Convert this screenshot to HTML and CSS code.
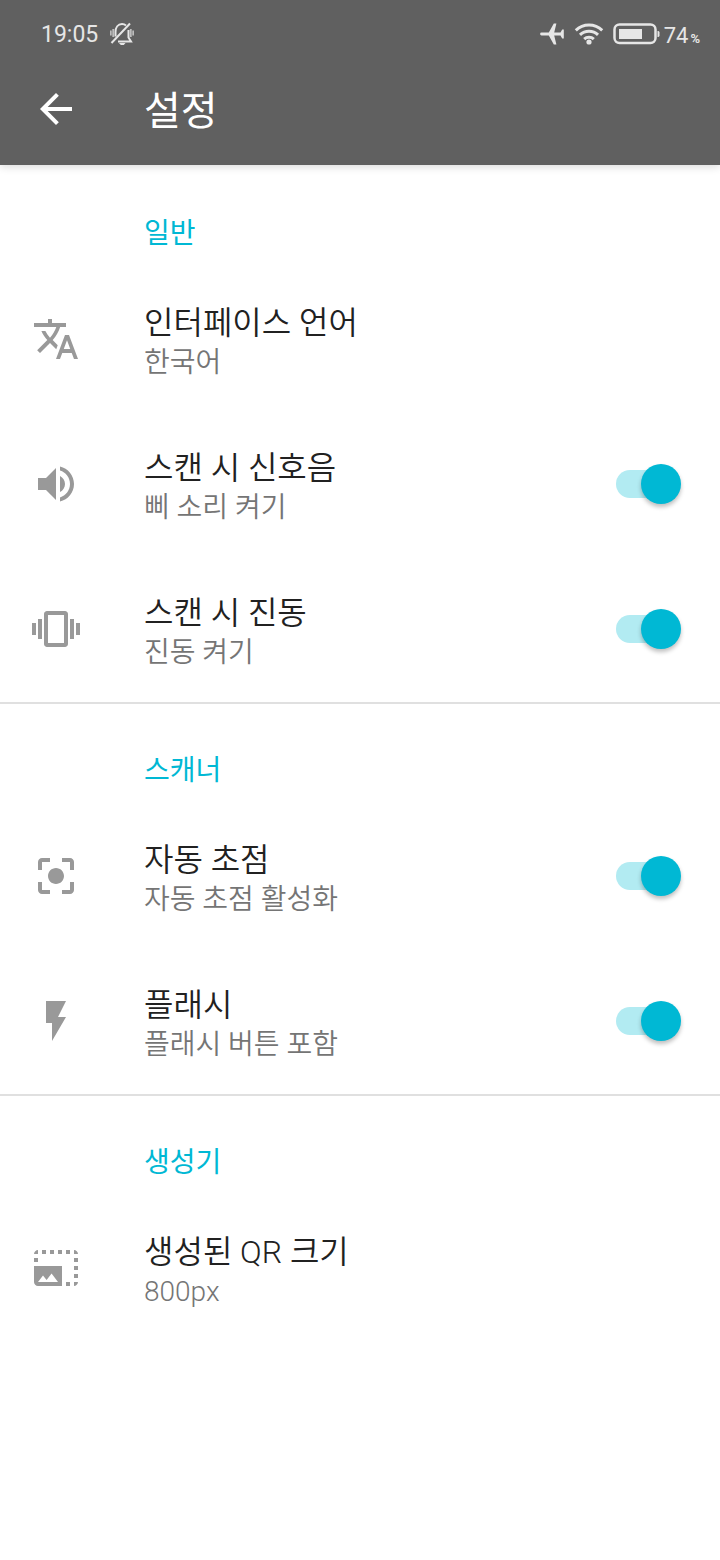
FILE: index.html
```html
<!DOCTYPE html>
<html lang="ko">
<head>
  <meta charset="UTF-8" />
  <meta name="viewport" content="width=device-width, initial-scale=1" />
  <title>설정</title>
  <link rel="stylesheet" href="styles.css">
</head>
<body>

  <header class="top">
    <!-- Status bar -->
    <div class="status-bar">
      <span class="clock">19:05</span>
      <svg class="bell" viewBox="0 0 24 24" width="24" height="24" fill="none" stroke="currentColor" stroke-width="2">
        <path d="M5.500 14.500V10C5.500 5.500 8 2 12 2c1.600 0 3 .5 4 1.400M18.500 8v7.500l2.500 4H8" />
        <path d="M1.500 21L20 1.500" />
        <path d="M9 21h6.500l-1.700 2h-3z" fill="currentColor" stroke="none" />
        <path d="M.8 8.500v5M3.200 7v8M20.800 7v8M23.200 8.500v5" stroke-width="1.800" opacity=".7" />
      </svg>
      <div class="status-icons">
        <svg class="plane" viewBox="0 0 26 24" width="26" height="24" fill="currentColor">
          <path d="M1.500 10.600h7.300L13.800 1.500h2.600l-2.200 9.100h6.300l1.700-3h1.600v8.800h-1.600l-1.700-3h-6.300l2.200 9.100h-2.600L8.800 13.400H1.500a1.400 1.400 0 0 1 0-2.800z" />
        </svg>
        <svg class="wifi" viewBox="0 0 30 24" width="30" height="24" fill="none" stroke="currentColor" stroke-width="3">
          <path d="M1.800 8.300a19 19 0 0 1 26.400 0M6 12.900a13 13 0 0 1 18 0M10.200 17.200a7 7 0 0 1 9.600 0" />
          <circle cx="15" cy="20" r="2.600" fill="currentColor" stroke="none" />
        </svg>
        <svg class="battery" viewBox="0 0 48 24" width="48" height="24" fill="currentColor">
          <rect x="2.500" y="2.500" width="41" height="18.500" rx="5" fill="none" stroke="currentColor" stroke-width="2.500" />
          <rect x="7" y="7" width="23" height="10" />
          <path d="M45.500 9h1l1 1v4l-1 1h-1z" />
        </svg>
        <span class="charge">74<small>%</small></span>
      </div>
    </div>

    <!-- App bar -->
    <div class="app-bar">
      <button class="back" type="button" aria-label="뒤로">
        <svg viewBox="0 0 24 24" width="48" height="48" fill="currentColor">
          <path d="M20 11H7.830l5.590-5.590L12 4l-8 8 8 8 1.410-1.410L7.830 13H20v-2z" />
        </svg>
      </button>
      <h1>설정</h1>
    </div>
  </header>

  <main>
    <section class="group">
      <h2>일반</h2>
      <button class="item" type="button">
        <svg class="icon" viewBox="0 0 24 24">
          <path d="M12.870 15.070l-2.540-2.510.03-.03c1.740-1.940 2.980-4.170 3.710-6.530H17V4h-7V2H8v2H1v1.990h11.170C11.500 7.920 10.440 9.750 9 11.350 8.070 10.320 7.300 9.190 6.690 8h-2c.73 1.630 1.730 3.170 2.980 4.560l-5.090 5.020L4 19l5-5 3.110 3.110.76-2.040zM18.500 10h-2L12 22h2l1.120-3h4.750L21 22h2l-4.500-12zm-2.620 7l1.620-4.330L19.120 17h-3.240z" />
        </svg>
        <span class="text">
          <span class="title">인터페이스 언어</span>
          <span class="summary">한국어</span>
        </span>
      </button>
      <label class="item">
        <svg class="icon" viewBox="0 0 24 24">
          <path d="M3 9v6h4l5 5V4L7 9H3zm13.500 3c0-1.770-1.020-3.290-2.500-4.030v8.050c1.480-.73 2.500-2.250 2.500-4.020zM14 3.230v2.060c2.890.86 5 3.540 5 6.710s-2.110 5.850-5 6.710v2.060c4.010-.91 7-4.490 7-8.770s-2.990-7.860-7-8.770z" />
        </svg>
        <span class="text">
          <span class="title">스캔 시 신호음</span>
          <span class="summary">삐 소리 켜기</span>
        </span>
        <input class="switch" type="checkbox" checked>
      </label>
      <label class="item">
        <svg class="icon" viewBox="0 0 24 24">
          <path d="M0 15h2V9H0v6zm3 2h2V7H3v10zm19-8v6h2V9h-2zm-3 8h2V7h-2v10zM16.500 3h-9C6.670 3 6 3.670 6 4.500v15c0 .83.67 1.500 1.500 1.500h9c.83 0 1.500-.67 1.500-1.500v-15c0-.83-.67-1.500-1.500-1.500zM16 19H8V5h8v14z" />
        </svg>
        <span class="text">
          <span class="title">스캔 시 진동</span>
          <span class="summary">진동 켜기</span>
        </span>
        <input class="switch" type="checkbox" checked>
      </label>
    </section>

    <section class="group">
      <h2>스캐너</h2>
      <label class="item">
        <svg class="icon" viewBox="0 0 24 24">
          <path d="M12 8c-2.210 0-4 1.790-4 4s1.790 4 4 4 4-1.790 4-4-1.790-4-4-4zm-7 7H3v4c0 1.100.9 2 2 2h4v-2H5v-4zM5 5h4V3H5c-1.100 0-2 .9-2 2v4h2V5zm14-2h-4v2h4v4h2V5c0-1.100-.9-2-2-2zm0 16h-4v2h4c1.100 0 2-.9 2-2v-4h-2v4z" />
        </svg>
        <span class="text">
          <span class="title">자동 초점</span>
          <span class="summary">자동 초점 활성화</span>
        </span>
        <input class="switch" type="checkbox" checked>
      </label>
      <label class="item">
        <svg class="icon" viewBox="0 0 24 24">
          <path d="M7 2v11h3v9l7-12h-4l4-8z" />
        </svg>
        <span class="text">
          <span class="title">플래시</span>
          <span class="summary">플래시 버튼 포함</span>
        </span>
        <input class="switch" type="checkbox" checked>
      </label>
    </section>

    <section class="group">
      <h2>생성기</h2>
      <button class="item" type="button">
        <svg class="icon" viewBox="0 0 24 24">
          <path d="M21 15h2v2h-2v-2zm0-4h2v2h-2v-2zm2 8h-2v2c1 0 2-1 2-2zM13 3h2v2h-2V3zm8 4h2v2h-2V7zm0-4v2h2c0-1-1-2-2-2zM1 7h2v2H1V7zm16-4h2v2h-2V3zm0 16h2v2h-2v-2zM3 3C2 3 1 4 1 5h2V3zm6 0h2v2H9V3zM5 3h2v2H5V3zm-4 8v8c0 1.100.9 2 2 2h12V11H1zm2 8l2.500-3.210 1.790 2.150 2.500-3.220L13 19H3z" />
        </svg>
        <span class="text">
          <span class="title">생성된 QR 크기</span>
          <span class="summary">800px</span>
        </span>
      </button>
    </section>
  </main>

</body>
</html>
```

FILE: styles.css
```css
/* ----- Reset & Basic Setup ----- */
* {
  margin: 0;
  padding: 0;
  box-sizing: border-box;
}

body {
  background: #fff;
  color: #212121;
  font-family: Roboto, "Noto Sans CJK KR", sans-serif;
}

button {
  border: 0;
  background: none;
  color: inherit;
  font: inherit;
  text-align: left;
}

svg {
  display: block;
  flex: none;
}

/* ----- Top: status bar + app bar ----- */
.top {
  background: #606060;
  color: #fff;
  box-shadow: 0 2px 8px rgba(0, 0, 0, 0.14);
}

.status-bar {
  display: flex;
  align-items: center;
  height: 68px;
  padding: 0 20px 0 41px;
  color: #e6e6e6;
  font-size: 23px;
  line-height: 28px;
}
.clock {
  padding-top: 1px;
}
.bell {
  margin-left: 12px;
}
.status-icons {
  display: flex;
  align-items: center;
  gap: 8px;
  margin-left: auto;
}
.charge {
  margin-left: -4px;
  padding-top: 3px;
  font-size: 22px;
}
.charge small {
  margin-left: 2px;
  font-size: 13px;
  font-weight: 700;
  line-height: 12px;
}

.app-bar {
  display: flex;
  align-items: center;
  gap: 64px;
  height: 97px;
  padding: 0 32px 16px;
}
.app-bar h1 {
  padding-top: 6px;
  font-size: 40px;
  font-weight: 400;
  line-height: 48px;
}

/* ----- Setting groups ----- */
.group {
  border-top: 2px solid #e0e0e0;
}
.group:first-child {
  border-color: transparent;
}
.group h2 {
  height: 100px;
  padding: 47px 32px 0 144px;
  color: #00b8d4;
  font-size: 28px;
  font-weight: 400;
  line-height: 40px;
}

.item {
  display: flex;
  align-items: center;
  gap: 64px;
  width: 100%;
  height: 145px;
  padding: 0 39px 1px 32px;
}
.icon {
  width: 48px;
  height: 48px;
  fill: #999;
}
.text {
  flex: 1;
  padding-top: 7px;
}
.title,
.summary {
  display: block;
  font-weight: 350;
  line-height: 40px;
}
.title {
  font-size: 32px;
}
.summary {
  color: #757575;
  font-size: 28px;
}

/* Switch: the track is ::before, the knob is ::after */
.switch {
  appearance: none;
  position: relative;
  flex: none;
  width: 65px;
  height: 40px;
}
.switch::before {
  content: "";
  position: absolute;
  inset: 6px 5px 6px 0;
  border-radius: 14px;
  background: #bdbdbd;
}
.switch::after {
  content: "";
  position: absolute;
  top: 0;
  left: 0;
  width: 40px;
  height: 40px;
  border-radius: 50%;
  background: #fafafa;
  box-shadow: 0 3px 4px rgba(0, 0, 0, 0.25);
}
.switch:checked::before {
  background: #b2ebf2;
}
.switch:checked::after {
  left: 25px;
  background: #00b8d4;
}
```
